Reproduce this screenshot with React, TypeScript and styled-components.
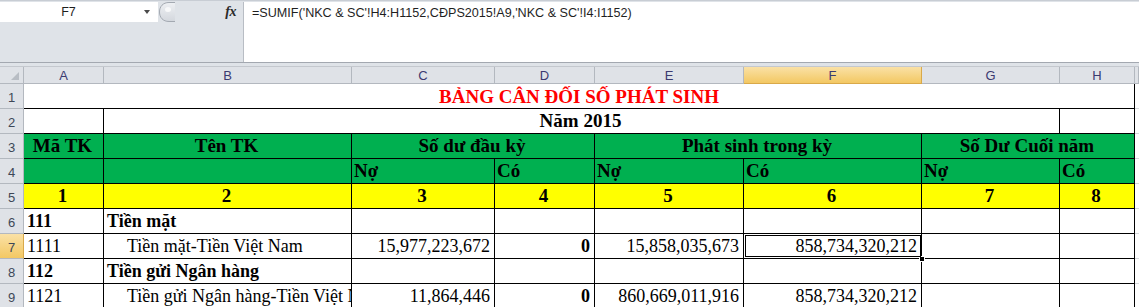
import React from 'react'
import styled, { createGlobalStyle } from 'styled-components'

const GlobalStyle = createGlobalStyle`
  html, body {
    margin: 0;
    padding: 0;
    background: #ffffff;
    overflow: hidden;
  }
  #root {
    width: 1139px;
    height: 307px;
    overflow: hidden;
  }
`

const serif = `'Liberation Serif', 'Times New Roman', serif`
const sans = `'Liberation Sans', Arial, sans-serif`

const COLUMNS = ['A', 'B', 'C', 'D', 'E', 'F', 'G', 'H']
const GREEN = '#00b050'
const YELLOW = '#ffff00'

type Align = 'left' | 'center' | 'right'

interface CellData {
  text?: string
  span?: number
  align?: Align
  bold?: boolean
  indent?: boolean
  selected?: boolean
}

interface RowData {
  fill?: string
  cells: CellData[]
}

const ROWS: RowData[] = [
  { cells: [] },
  {
    cells: [
      {},
      { text: 'Năm 2015', span: 6, align: 'center', bold: true },
      {}
    ]
  },
  {
    fill: GREEN,
    cells: [
      { text: 'Mã TK', align: 'center', bold: true },
      { text: 'Tên TK', align: 'center', bold: true },
      { text: 'Số dư đầu kỳ', span: 2, align: 'center', bold: true },
      { text: 'Phát sinh trong kỳ', span: 2, align: 'center', bold: true },
      { text: 'Số Dư Cuối năm', span: 2, align: 'center', bold: true }
    ]
  },
  {
    fill: GREEN,
    cells: [
      {},
      {},
      { text: 'Nợ', bold: true },
      { text: 'Có', bold: true },
      { text: 'Nợ', bold: true },
      { text: 'Có', bold: true },
      { text: 'Nợ', bold: true },
      { text: 'Có', bold: true }
    ]
  },
  {
    fill: YELLOW,
    cells: ['1', '2', '3', '4', '5', '6', '7', '8'].map(n => ({ text: n, align: 'center' as Align, bold: true }))
  },
  {
    cells: [
      { text: '111', bold: true },
      { text: 'Tiền mặt', bold: true },
      {}, {}, {}, {}, {}, {}
    ]
  },
  {
    cells: [
      { text: '1111' },
      { text: 'Tiền mặt-Tiền Việt Nam', indent: true },
      { text: '15,977,223,672', align: 'right' },
      { text: '0', align: 'right', bold: true },
      { text: '15,858,035,673', align: 'right' },
      { text: '858,734,320,212', align: 'right', selected: true },
      {}, {}
    ]
  },
  {
    cells: [
      { text: '112', bold: true },
      { text: 'Tiền gửi Ngân hàng', bold: true },
      {}, {}, {}, {}, {}, {}
    ]
  },
  {
    cells: [
      { text: '1121' },
      { text: 'Tiền gửi Ngân hàng-Tiền Việt Nam', indent: true },
      { text: '11,864,446', align: 'right' },
      { text: '0', align: 'right', bold: true },
      { text: '860,669,011,916', align: 'right' },
      { text: '858,734,320,212', align: 'right' },
      {}, {}
    ]
  }
]

const App: React.FC = () => {
  return (
    <>
      <GlobalStyle />
      <Window>
        {/* Formula bar */}
        <Toolbar>
          <NameArea>
            <NameBox>
              <NameText>F7</NameText>
              <DropArrow />
            </NameBox>
            <Grip width="17" height="20" viewBox="0 0 17 20">
              <defs>
                <linearGradient id="gripFill" x1="0" y1="0" x2="0" y2="1">
                  <stop offset="0" stopColor="#eef0f3" />
                  <stop offset="1" stopColor="#d3d7dd" />
                </linearGradient>
              </defs>
              <path d="M17 0.5 H11 C5 0.5 1.5 4.5 1.5 10 C1.5 15.5 5 19.5 11 19.5 H17" fill="url(#gripFill)" stroke="#a3a9b1" />
              <ellipse cx="10" cy="7.5" rx="3" ry="2.5" fill="#f8f9fa" />
            </Grip>
            <FxLabel>fx</FxLabel>
          </NameArea>
          <FormulaInput>=SUMIF('NKC &amp; SC'!H4:H1152,CĐPS2015!A9,'NKC &amp; SC'!I4:I1152)</FormulaInput>
        </Toolbar>
        <Divider />

        {/* Worksheet grid */}
        <Sheet>
          <Corner>
            <CornerMark />
          </Corner>
          {COLUMNS.map(c => (
            <ColHead key={c} $active={c === 'F'}>{c}</ColHead>
          ))}
          <ColHead />

          {ROWS.map((row, i) => (
            <React.Fragment key={i}>
              <RowHead $active={i === 6}>{i + 1}</RowHead>
              {i === 0 ? (
                <TitleCell>BẢNG CÂN ĐỐI SỐ PHÁT SINH</TitleCell>
              ) : (
                row.cells.map((cell, j) => (
                  <Cell
                    key={j}
                    $span={cell.span ?? 1}
                    $fill={row.fill ?? '#ffffff'}
                    $align={cell.align ?? 'left'}
                    $bold={!!cell.bold}
                    $indent={!!cell.indent}
                    $header={i >= 1 && i <= 4}
                    $selected={!!cell.selected}
                  >
                    {cell.text}
                  </Cell>
                ))
              )}
              <Filler />
            </React.Fragment>
          ))}
        </Sheet>
      </Window>
    </>
  )
}

const Window = styled.div`
  width: 1139px;
  height: 307px;
  background: #dfe3e8;
  overflow: hidden;
`

const Toolbar = styled.div`
  display: flex;
  box-sizing: border-box;
  height: 62px;
  padding-top: 1px;
  border-top: 1px solid #c8cdd4;
  background: #dfe3e8;
`

const NameArea = styled.div`
  display: flex;
  align-items: flex-start;
  width: 243px;
  flex-shrink: 0;
`

const NameBox = styled.div`
  display: flex;
  align-items: center;
  width: 158px;
  height: 20px;
  background: #ffffff;
`

const NameText = styled.div`
  flex: 1;
  text-align: center;
  font: 12.5px ${sans};
  color: #1e1e1e;
  padding-right: 7px;
`

const DropArrow = styled.div`
  width: 0;
  height: 0;
  margin-right: 8px;
  border-left: 3.5px solid transparent;
  border-right: 3.5px solid transparent;
  border-top: 4px solid #4a4a4a;
`

const Grip = styled.svg`
  display: block;
  flex-shrink: 0;
`

const FxLabel = styled.div`
  flex: 1;
  text-align: right;
  padding: 2px 7px 0 0;
  font: italic bold 14px ${serif};
  color: #2a2a2a;
  letter-spacing: -0.5px;
`

const FormulaInput = styled.div`
  flex: 1;
  height: 60px;
  box-sizing: border-box;
  padding: 3px 8px 0;
  background: #ffffff;
  border-left: 1px solid #b8bdc4;
  font: 12.6px/17px ${sans};
  color: #1f1f1f;
  white-space: nowrap;
`

const Divider = styled.div`
  height: 3px;
  background: #dfe3e8;
  border-top: 1px solid #a3a8b0;
  border-bottom: 1px solid #c4c8ce;
`

const Sheet = styled.div`
  display: grid;
  grid-template-columns: 24px 80px 248px 143px 100px 149px 178px 138px 75px 1fr;
  grid-template-rows: 17px repeat(9, 25px);
  background: #ffffff;
`

const Corner = styled.div`
  position: relative;
  box-sizing: border-box;
  background: #dfe2e7;
  border-right: 1px solid #b3b8bf;
  border-bottom: 1px solid #b3b8bf;
`

const CornerMark = styled.div`
  position: absolute;
  right: 4px;
  bottom: 3px;
  width: 0;
  height: 0;
  border-left: 8px solid transparent;
  border-bottom: 8px solid #b8bdc4;
`

const ColHead = styled.div<{ $active?: boolean }>`
  box-sizing: border-box;
  display: flex;
  align-items: center;
  justify-content: center;
  background: ${p => (p.$active ? 'linear-gradient(#fae1a6, #f3c863)' : '#dfe2e7')};
  border-right: 1px solid ${p => (p.$active ? '#d9a94a' : '#b3b8bf')};
  border-bottom: 1px solid ${p => (p.$active ? '#d9a94a' : '#b3b8bf')};
  font: 13px ${sans};
  color: #3b3a70;
`

const RowHead = styled.div<{ $active?: boolean }>`
  box-sizing: border-box;
  display: flex;
  align-items: center;
  justify-content: center;
  padding-top: 3px;
  background: ${p => (p.$active ? 'linear-gradient(#fae1a6, #f3c863)' : '#dfe2e7')};
  border-right: 1px solid ${p => (p.$active ? '#d9a94a' : '#b3b8bf')};
  border-bottom: 1px solid #b3b8bf;
  font: 13px ${sans};
  color: #3d4757;
`

const TitleCell = styled.div`
  grid-column: span 8;
  box-sizing: border-box;
  display: flex;
  align-items: flex-end;
  justify-content: center;
  border-right: 1px solid #000000;
  border-bottom: 1px solid #000000;
  font: bold 19px/22px ${serif};
  color: #ff0000;
  white-space: nowrap;
`

const justify = { left: 'flex-start', center: 'center', right: 'flex-end' }

const Cell = styled.div<{
  $span: number
  $fill: string
  $align: Align
  $bold: boolean
  $indent: boolean
  $header: boolean
  $selected: boolean
}>`
  grid-column: span ${p => p.$span};
  position: relative;
  box-sizing: border-box;
  display: flex;
  align-items: flex-end;
  justify-content: ${p => justify[p.$align]};
  padding: 0 4px 1px ${p => (p.$indent ? 23 : p.$header ? 2 : 3)}px;
  background: ${p => p.$fill};
  border-right: 1px solid #000000;
  border-bottom: 1px solid #000000;
  font: ${p => (p.$bold ? 'bold' : 'normal')} ${p => (p.$header ? 19 : 18)}px/22px ${serif};
  color: #000000;
  white-space: nowrap;
  overflow: ${p => (p.$selected ? 'visible' : 'hidden')};
  z-index: ${p => (p.$selected ? 2 : 'auto')};

  ${p => p.$selected && `
    &::after {
      content: '';
      position: absolute;
      left: 1px;
      top: 1px;
      right: 0;
      bottom: 1px;
      border: 1px solid #000000;
      pointer-events: none;
    }
    &::before {
      content: '';
      position: absolute;
      right: -4px;
      bottom: -4px;
      width: 4px;
      height: 4px;
      background: #000000;
      border: 1px solid #ffffff;
    }
  `}
`

const Filler = styled.div`
  box-sizing: border-box;
  background: #ffffff;
  border-bottom: 1px solid #d4d7db;
`

export default App
